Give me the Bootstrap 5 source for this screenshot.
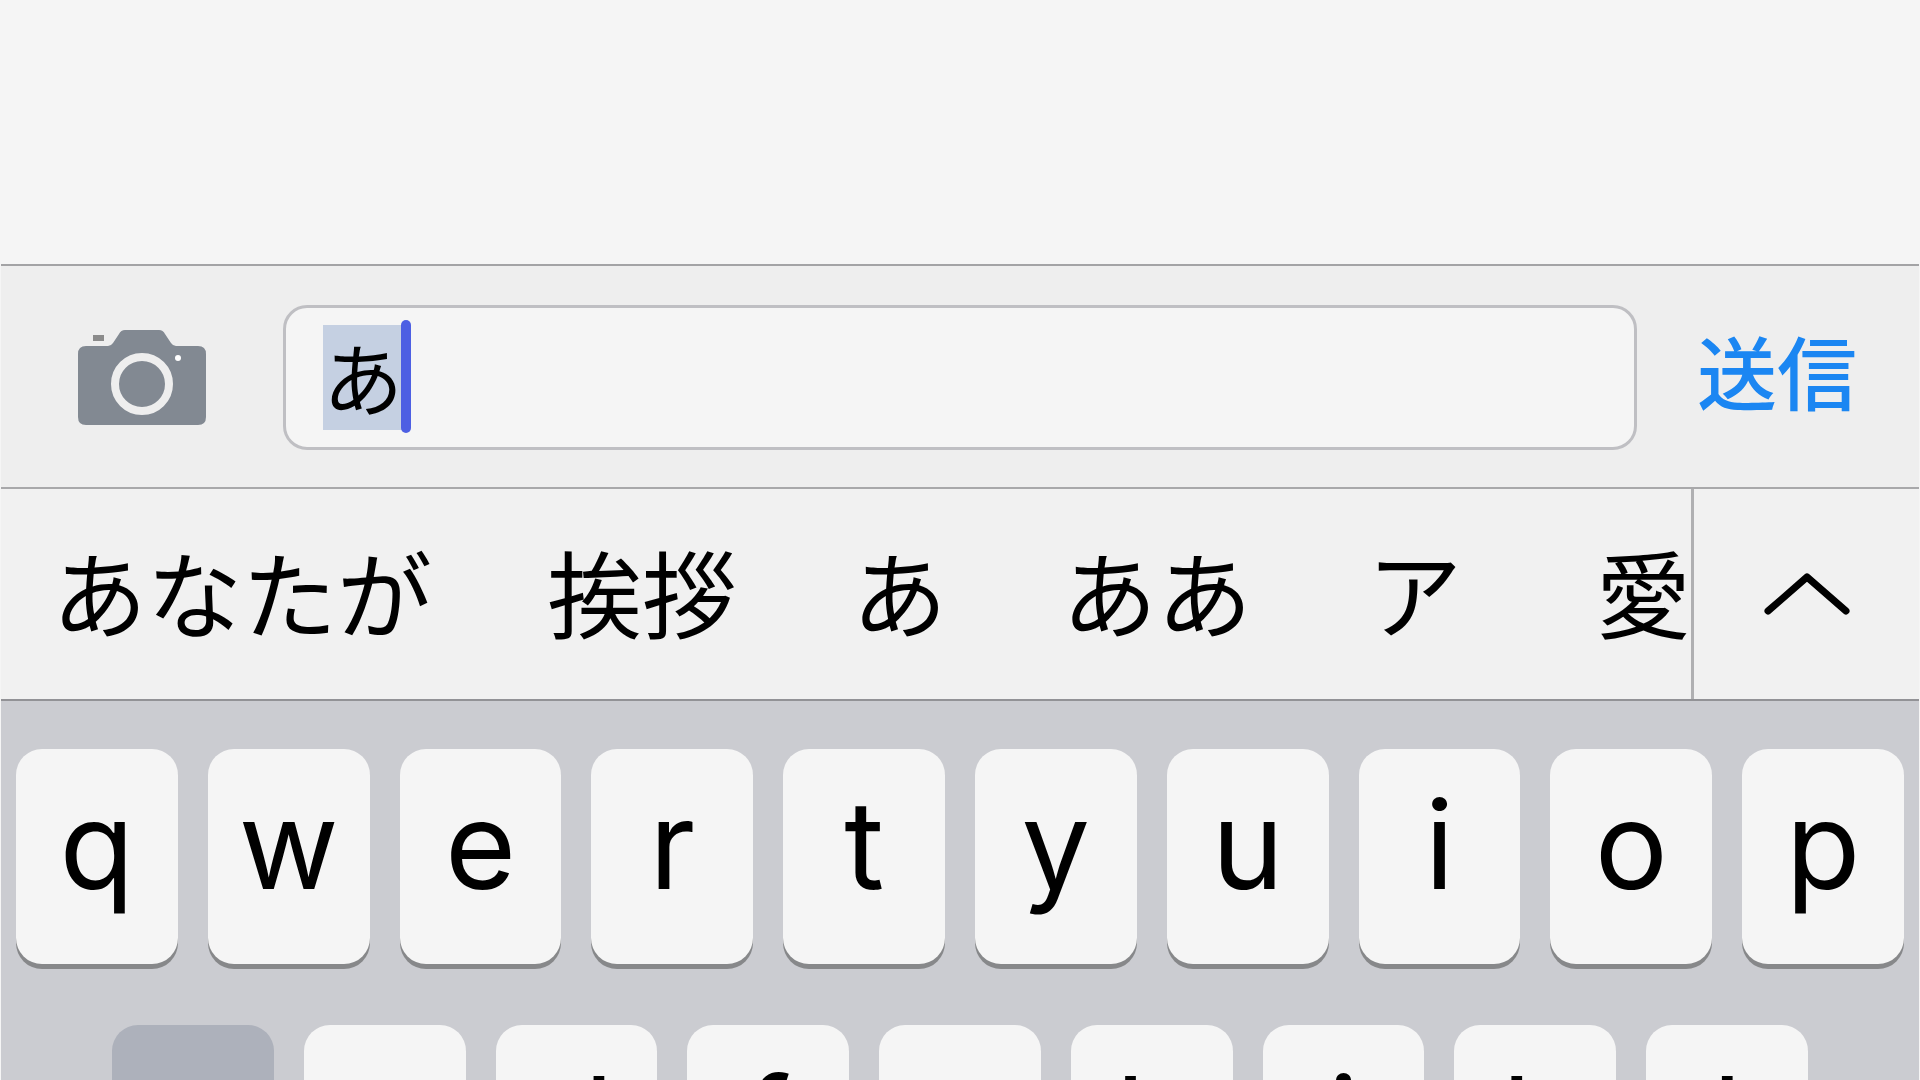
<!DOCTYPE html>
<html lang="ja">
<head>
<meta charset="utf-8">
<meta name="viewport" content="width=device-width, initial-scale=1">
<title>メッセージ</title>
<link href="https://cdn.jsdelivr.net/npm/bootstrap@5.3.0/dist/css/bootstrap.min.css" rel="stylesheet">
<style>
  body { background: #f5f5f5; color: #000; font-family: Inter, "Noto Sans CJK JP", sans-serif; }
  .jp { font-family: "Noto Sans CJK JP", sans-serif; }
  .phone { padding: 0 1px; }
  .thread { height: 264px; }

  .compose { background: #eee; border-top: 2px solid #a3a3a5; padding: 39px 62px 37px 77px; gap: 60px; }
  .plain { background: none; border: 0; padding: 0; color: inherit; }
  .camera svg { display: block; width: 128px; height: 96px; }
  .field { height: 145px; margin-left: 17px; background: #f5f5f5; border: 3px solid #bfbfc3; border-radius: 24px; }
  .field input { background: none; border: 0; outline: 0; padding: 0 37px 6px; font-size: 80px; color: #000; caret-color: transparent; }
  .marked { left: 37px; top: 17px; width: 80px; height: 105px; background: #c5d0e2; }
  .cursor { left: 115px; top: 12px; width: 10px; height: 113px; border-radius: 5px; background: #4d5fe3; }
  .compose .send { font-size: 80px; line-height: 100px; font-weight: 500; color: #1b86f2; padding-bottom: 18px; }

  .suggest { background: #f1f1f1; border-top: 2px solid #a8a8aa; border-bottom: 2px solid #929296; height: 214px; }
  .words { gap: 115px; padding: 0 0 6px 51px; }
  .words button { font-size: 95px; line-height: 120px; white-space: nowrap; }
  .more { width: 228px; border-left: 3px solid #b0b0b2; }
  .more svg { width: 90px; height: 60px; }

  .keys { background: #cbccd1; padding: 48px 15px 0; gap: 61px; }
  .keyrow { gap: 30px; }
  .key { flex: 0 0 calc((100% - 270px) / 10); height: 215px; padding: 0 0 24px; border: 0; border-radius: 26px; background: #f5f5f5; color: #000; font-size: 122px; line-height: 191px; box-shadow: 0 5px 0 #87888a; }
  .key.held { background: #adb1bb; }
</style>
<script src="https://cdn.jsdelivr.net/npm/bootstrap@5.3.0/dist/js/bootstrap.bundle.min.js"></script>
</head>
<body>
<div class="phone vh-100 d-flex flex-column overflow-hidden">
  <main class="thread flex-shrink-0"></main>

  <form class="compose d-flex align-items-center flex-shrink-0">
    <button type="button" class="plain camera" aria-label="カメラ">
      <svg viewBox="0 0 128 96" aria-hidden="true">
        <path fill="#828992" d="M8 16H30Q33 16 35 13L41 4Q43 0 47 0H81Q85 0 87 4L93 13Q95 16 98 16H120Q128 16 128 24V87Q128 95 120 95H8Q0 95 0 87V24Q0 16 8 16Z"/>
        <path fill="#8b8b8b" d="M15 5H26V11H15Z"/>
        <circle cx="64" cy="54" r="27" fill="none" stroke="#eee" stroke-width="8"/>
        <circle cx="100" cy="28" r="3" fill="#fff"/>
      </svg>
    </button>
    <div class="field flex-grow-1 position-relative">
      <span class="marked position-absolute"></span>
      <input type="text" class="jp w-100 h-100 position-relative" value="あ" aria-label="メッセージ" autocomplete="off">
      <span class="cursor position-absolute"></span>
    </div>
    <button type="button" class="plain send jp">送信</button>
  </form>

  <div class="suggest d-flex flex-shrink-0">
    <div class="words jp d-flex align-items-center flex-grow-1 overflow-hidden">
      <button type="button" class="plain">あなたが</button>
      <button type="button" class="plain">挨拶</button>
      <button type="button" class="plain">あ</button>
      <button type="button" class="plain">ああ</button>
      <button type="button" class="plain">ア</button>
      <button type="button" class="plain ms-auto">愛</button>
    </div>
    <div class="more d-flex flex-shrink-0">
      <button type="button" class="plain flex-fill" aria-label="候補をすべて表示">
        <svg viewBox="0 0 90 60" aria-hidden="true"><path d="M6 47L45 13L84 47" fill="none" stroke="#000" stroke-width="7" stroke-linecap="round" stroke-linejoin="round"/></svg>
      </button>
    </div>
  </div>

  <div class="keys d-flex flex-column flex-grow-1">
    <div class="keyrow d-flex justify-content-center">
      <button type="button" class="key">q</button>
      <button type="button" class="key">w</button>
      <button type="button" class="key">e</button>
      <button type="button" class="key">r</button>
      <button type="button" class="key">t</button>
      <button type="button" class="key">y</button>
      <button type="button" class="key">u</button>
      <button type="button" class="key">i</button>
      <button type="button" class="key">o</button>
      <button type="button" class="key">p</button>
    </div>
    <div class="keyrow d-flex justify-content-center">
      <button type="button" class="key held">a</button>
      <button type="button" class="key">s</button>
      <button type="button" class="key">d</button>
      <button type="button" class="key">f</button>
      <button type="button" class="key">g</button>
      <button type="button" class="key">h</button>
      <button type="button" class="key">j</button>
      <button type="button" class="key">k</button>
      <button type="button" class="key">l</button>
    </div>
  </div>
</div>
</body>
</html>
